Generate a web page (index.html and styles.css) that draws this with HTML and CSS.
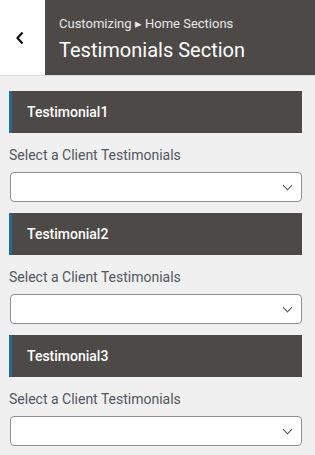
FILE: index.html
```html
<!DOCTYPE html>
<html lang="en">

<head>
    <meta charset="UTF-8">
    <meta name="viewport" content="width=device-width, initial-scale=1.0">
    <title>Testimonials Section</title>
    <link rel="stylesheet" href="styles.css">
</head>

<body>
    <div class="cabecera">
        <button class="volver" aria-label="Back">
            <svg width="10" height="14" viewBox="0 0 10 14">
                <path d="M7.5 1.5 L2.5 7 L7.5 12.5" fill="none" stroke="#111" stroke-width="2.2" />
            </svg>
        </button>
        <div class="titulo">
            <span class="migas">Customizing &#9656; Home Sections</span>
            <h1>Testimonials Section</h1>
        </div>
    </div>

    <div class="contenido">
        <div class="seccion">
            <h3 class="seccion-titulo">Testimonial1</h3>
            <label class="etiqueta">Select a Client Testimonials</label>
            <div class="selector">
                <select></select>
            </div>
        </div>

        <div class="seccion">
            <h3 class="seccion-titulo">Testimonial2</h3>
            <label class="etiqueta">Select a Client Testimonials</label>
            <div class="selector">
                <select></select>
            </div>
        </div>

        <div class="seccion">
            <h3 class="seccion-titulo">Testimonial3</h3>
            <label class="etiqueta">Select a Client Testimonials</label>
            <div class="selector">
                <select></select>
            </div>
        </div>
    </div>
</body>

</html>
```

FILE: styles.css
```css
body {
    font-family: Roboto, "Liberation Sans", sans-serif;
    margin: 0;
    background-color: #f0f0f1;
    color: #50575e;
}

.cabecera {
    display: flex;
    height: 75px;
    border-bottom: 1px solid #dcdcde;
}

.volver {
    width: 45px;
    border: none;
    padding: 0 5px 0 0;
    background-color: #fff;
    display: flex;
    align-items: center;
    justify-content: center;
    cursor: pointer;
}

.titulo {
    flex: 1;
    background-color: #4d4947;
    padding: 13px 14px 0;
    color: #fff;
}

.migas {
    display: block;
    font-size: 13px;
    line-height: 22px;
    color: #e8e8e8;
}

.titulo h1 {
    margin: 0;
    font-size: 20px;
    font-weight: 400;
    line-height: 31px;
}

.contenido {
    padding: 15px 13px 0 9px;
}

.seccion {
    margin-bottom: 11px;
}

.seccion-titulo {
    margin: 0;
    height: 42px;
    display: flex;
    align-items: center;
    padding-left: 15px;
    border-left: 3px solid #1c6c9c;
    background-color: #4d4947;
    color: #fff;
    font-size: 14px;
    font-weight: 500;
}

.etiqueta {
    display: block;
    margin-top: 12px;
    font-size: 14px;
    line-height: 20px;
}

.selector {
    position: relative;
    margin: 7px 0 0 1px;
}

.selector select {
    width: 100%;
    height: 30px;
    border: 1px solid #8c8f94;
    border-radius: 4px;
    background-color: #fff;
    appearance: none;
    -webkit-appearance: none;
}

.selector::after {
    content: "";
    position: absolute;
    right: 11px;
    top: 10px;
    width: 6px;
    height: 6px;
    border-right: 1.5px solid #50575e;
    border-bottom: 1.5px solid #50575e;
    transform: rotate(45deg);
    pointer-events: none;
}
```
